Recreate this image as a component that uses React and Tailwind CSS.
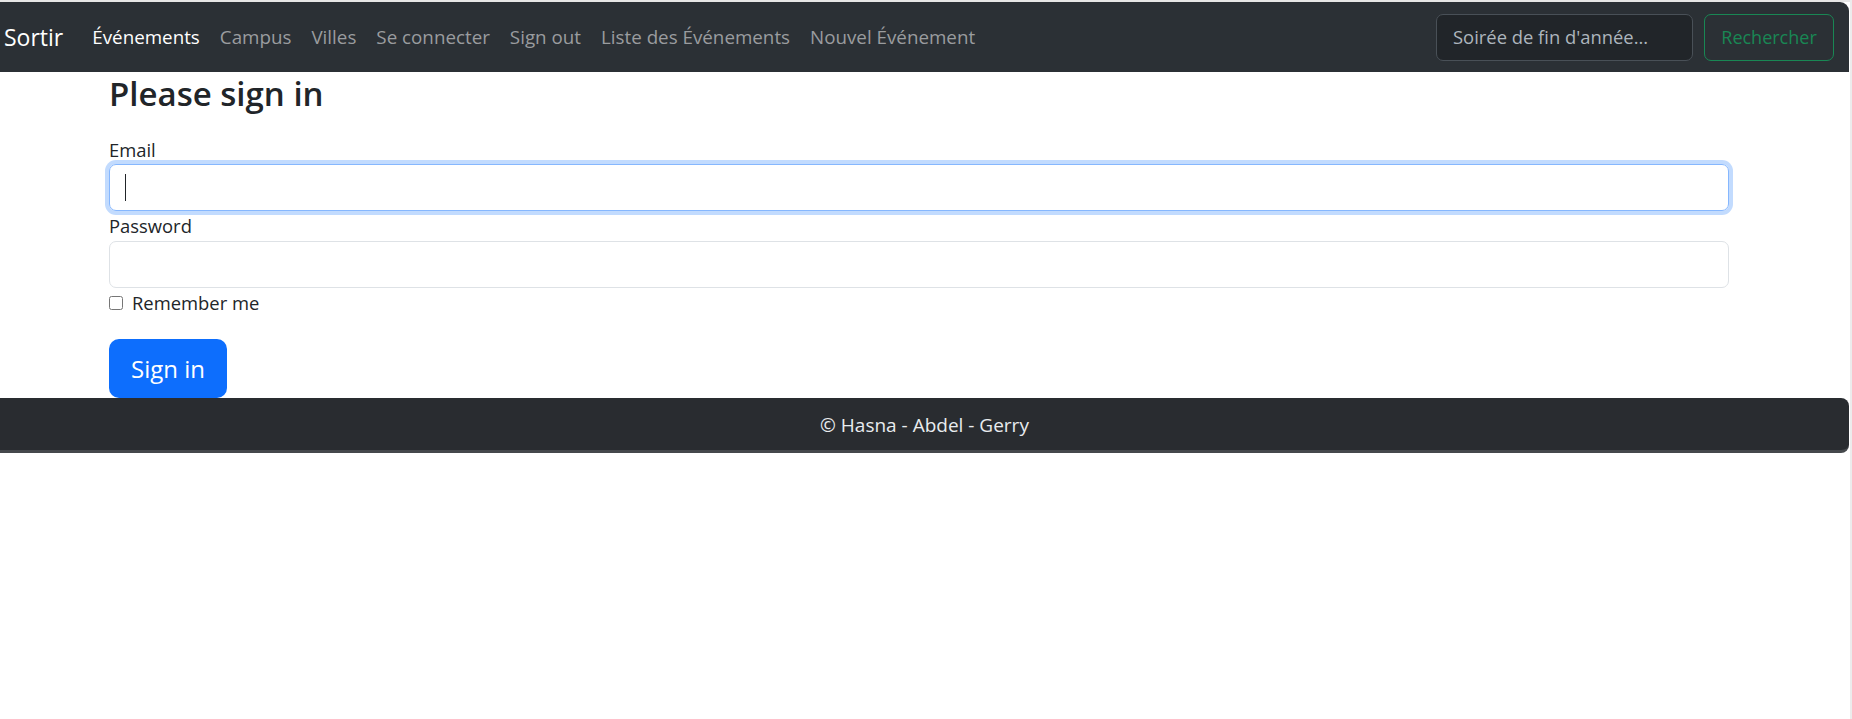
import { useEffect, useRef } from 'react';

const navLinks = ['Campus', 'Villes', 'Se connecter', 'Sign out', 'Liste des Événements', 'Nouvel Événement'];

export default function App() {
  const emailRef = useRef(null);

  useEffect(() => {
    emailRef.current?.focus();
  }, []);

  return (
    <div
      className="min-h-screen bg-white pt-[2px] pr-[3px] text-[#212529]"
      style={{ fontFamily: '"Open Sans", "Noto Sans", sans-serif' }}
    >
      <div className="fixed top-0 left-0 right-0 h-[2px] bg-[#e6e6e6]" />
      <div className="fixed top-0 right-0 bottom-0 w-[2px] bg-[#ececec]" />

      {/* Navbar */}
      <nav className="flex h-[70px] items-center rounded-tr-[9px] bg-[#2b3035] pr-[15px]">
        <a className="pl-[4px] pr-[29px] text-[23px] leading-none text-white">Sortir</a>
        <ul className="flex items-center gap-[20px] text-[18.8px]">
          <li className="text-white">Événements</li>
          {navLinks.map(link => (
            <li key={link} className="text-[#9a9c9f]">{link}</li>
          ))}
        </ul>
        <div className="ml-auto flex items-center gap-[11px]">
          <div className="flex h-[47px] w-[257px] items-center rounded-[7px] border border-[#495057] bg-[#212529] px-[16px] text-[18.4px] text-[#adb5bd]">
            Soirée de fin d'année...
          </div>
          <button className="h-[47px] w-[130px] rounded-[7px] border border-[#198754] text-[18px] text-[#198754]">
            Rechercher
          </button>
        </div>
      </nav>

      {/* Login form */}
      <main className="pl-[109px] pr-[120px] pt-[2px]">
        <h3 className="mb-[21px] text-[33px] font-semibold leading-[40px]">Please sign in</h3>
        <label className="block text-[18.4px] leading-[29px]">Email</label>
        <div className="relative">
          <input
            ref={emailRef}
            type="email"
            className="block h-[47px] w-full rounded-[7px] border border-[#86b7fe] px-[16px] text-[18.4px] outline-none ring-[4px] ring-[#c2dbfe] caret-transparent"
          />
          {/* text caret */}
          <span className="pointer-events-none absolute left-[16px] top-[10px] h-[27px] w-[1px] bg-[#212529]" />
        </div>
        <label className="block text-[18.4px] leading-[30px]">Password</label>
        <input
          type="password"
          className="block h-[47px] w-full rounded-[7px] border border-[#dee2e6] px-[16px] text-[18.4px] outline-none"
        />
        <label className="flex h-[30px] items-center gap-[9px] text-[18.4px]">
          <input type="checkbox" className="h-[14px] w-[14px]" />
          Remember me
        </label>
        <button className="mt-[21px] h-[59px] rounded-[10px] bg-[#0d6efd] px-[22px] text-[24px] leading-none text-white">
          Sign in
        </button>
      </main>

      {/* Footer */}
      <footer className="flex h-[55px] items-center justify-center rounded-r-[8px] border-b-[3px] border-[#45484c] bg-[#292c30] pt-[3px] text-[19px] text-[#e9ecef]">
        © Hasna - Abdel - Gerry
      </footer>
    </div>
  );
}
